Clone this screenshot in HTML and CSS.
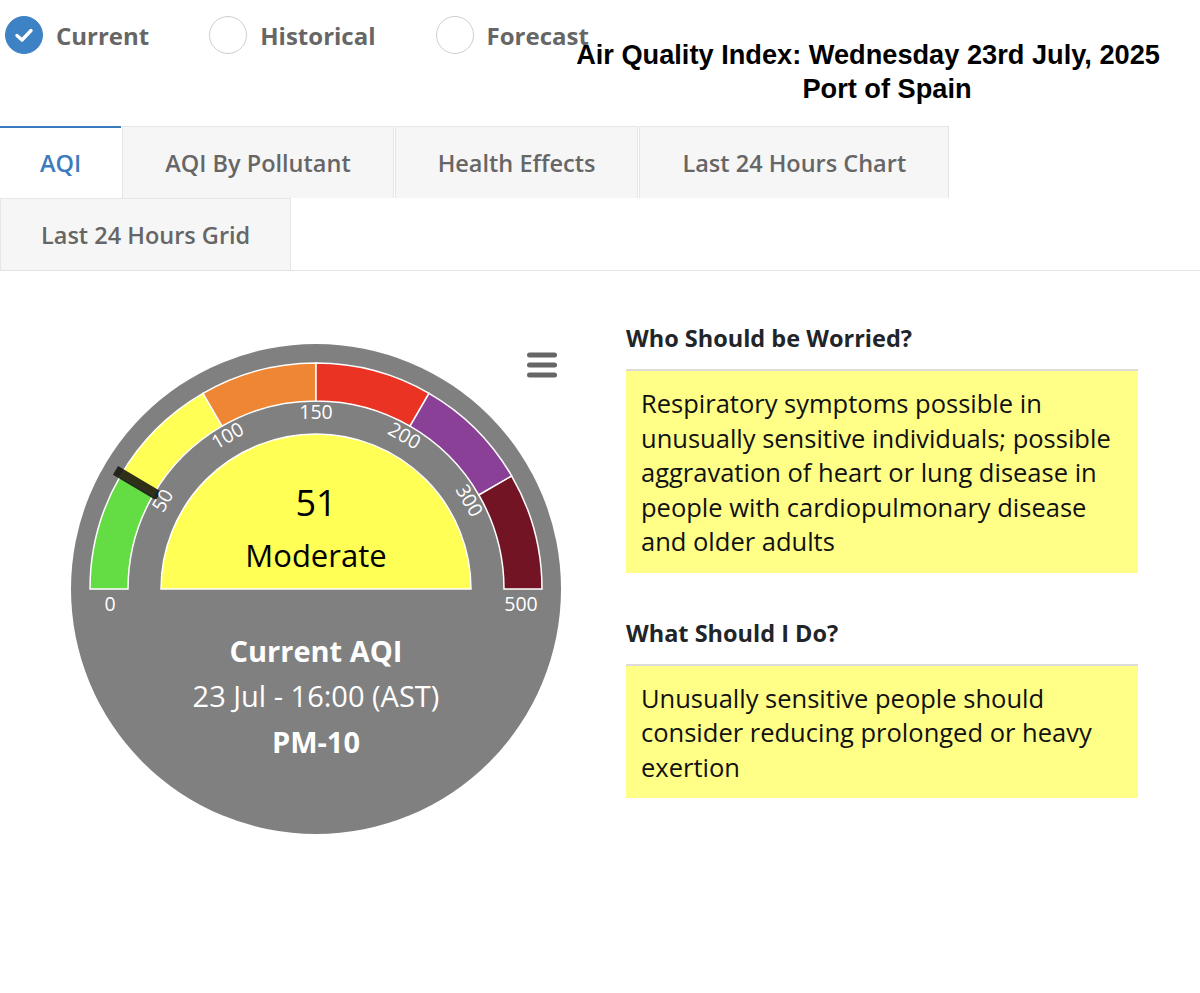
FILE: index.html
```html
<!DOCTYPE html>
<html lang="en">
<head>
<meta charset="utf-8">
<title>Air Quality Index</title>
<link rel="stylesheet" href="styles.css">
</head>
<body>
<div class="modes">
  <label class="mode"><span class="radio checked"><svg width="20" height="16" viewBox="0 0 20 16"><path d="M3 8.5 L8 13 L17 3.5" fill="none" stroke="#fff" stroke-width="3.4" stroke-linecap="round" stroke-linejoin="round"/></svg></span>Current</label>
  <label class="mode"><span class="radio"></span>Historical</label>
  <label class="mode"><span class="radio"></span>Forecast</label>
</div>
<div class="title">
  <div class="l1">Air Quality Index: Wednesday 23rd July, 2025</div>
  <div class="l2">Port of Spain</div>
</div>
<ul class="tabs">
  <li class="tab active">AQI</li>
  <li class="tab">AQI By Pollutant</li>
  <li class="tab">Health Effects</li>
  <li class="tab">Last 24 Hours Chart</li>
  <li class="break"></li>
  <li class="tab narrow">Last 24 Hours Grid</li>
</ul>
<div class="content">
  <svg class="gauge" width="600" height="570" viewBox="0 290 600 570">
    <circle cx="316" cy="588" r="245" fill="#808080"/>
    <g stroke="#fff" stroke-width="1.5">
      <path d="M90 588 A226 226 0 0 1 120.28 475 L153.19 494 A188 188 0 0 0 128 588 Z" fill="#63dd43"/>
      <path d="M120.28 475 A226 226 0 0 1 203 392.28 L222 425.19 A188 188 0 0 0 153.19 494 Z" fill="#ffff55"/>
      <path d="M203 392.28 A226 226 0 0 1 316 362 L316 400 A188 188 0 0 0 222 425.19 Z" fill="#ef8633"/>
      <path d="M316 362 A226 226 0 0 1 429 392.28 L410 425.19 A188 188 0 0 0 316 400 Z" fill="#ea3323"/>
      <path d="M429 392.28 A226 226 0 0 1 511.72 475 L478.81 494 A188 188 0 0 0 410 425.19 Z" fill="#8a4096"/>
      <path d="M511.72 475 A226 226 0 0 1 542 588 L504 588 A188 188 0 0 0 478.81 494 Z" fill="#731425"/>
      <path d="M161 588 A155 155 0 0 1 471 588 Z" fill="#ffff55"/>
    </g>
    <line x1="115.5" y1="469.4" x2="158.5" y2="494.9" stroke="#1a1a10" stroke-opacity="0.9" stroke-width="10"/>
    <g class="ticks">
      <text x="110" y="610">0</text>
      <text transform="translate(162.7 499.5) rotate(-60)" dy="6.8">50</text>
      <text transform="translate(227.5 434.7) rotate(-30)" dy="6.8">100</text>
      <text transform="translate(316 411) rotate(0)" dy="6.8">150</text>
      <text transform="translate(404.5 434.7) rotate(30)" dy="6.8">200</text>
      <text transform="translate(469.3 499.5) rotate(60)" dy="6.8">300</text>
      <text x="521" y="610">500</text>
    </g>
    <text class="val" x="316" y="515">51</text>
    <text class="cat" x="316" y="566">Moderate</text>
    <text class="lbl b" x="316" y="661">Current AQI</text>
    <text class="lbl" x="316" y="706">23 Jul - 16:00 (AST)</text>
    <text class="lbl b" x="316" y="752">PM-10</text>
    <g fill="#666">
      <rect x="527" y="351.5" width="30" height="5" rx="2.5"/>
      <rect x="527" y="361.5" width="30" height="5" rx="2.5"/>
      <rect x="527" y="371.5" width="30" height="5" rx="2.5"/>
    </g>
  </svg>
  <div class="info">
    <h3>Who Should be Worried?</h3>
    <div class="box">Respiratory symptoms possible in unusually sensitive individuals; possible aggravation of heart or lung disease in people with cardiopulmonary disease and older adults</div>
    <h3 class="second">What Should I Do?</h3>
    <div class="box">Unusually sensitive people should consider reducing prolonged or heavy exertion</div>
  </div>
</div>
</body>
</html>
```
FILE: styles.css
```css
body {
  margin: 0;
  background: #fff;
  font-family: "Open Sans", "Liberation Sans", sans-serif;
}

.modes {
  display: flex;
  align-items: center;
  gap: 60px;
  height: 70px;
  padding-left: 5px;
}

.mode {
  display: flex;
  align-items: center;
  gap: 13px;
  font-size: 24px;
  font-weight: 700;
  color: #666;
}

.radio {
  width: 38px;
  height: 38px;
  box-sizing: border-box;
  border-radius: 50%;
  border: 1.5px solid #cfcfcf;
  background: #fff;
  display: flex;
  align-items: center;
  justify-content: center;
}

.radio.checked {
  background: #3c82c4;
  border-color: #3c82c4;
}

.title {
  margin: -32px 0 0 560px;
  width: 616px;
  display: flex;
  flex-direction: column;
  align-items: center;
  font-family: "Liberation Sans", Arial, sans-serif;
  font-weight: 700;
  font-size: 27.2px;
  line-height: 34px;
  color: #000;
}

.title .l2 {
  padding-left: 38px;
}

.tabs {
  list-style: none;
  margin: 20px 0 0;
  padding: 0;
  display: flex;
  flex-wrap: wrap;
  border-bottom: 1px solid #e3e3e3;
}

.tab {
  height: 72px;
  box-sizing: border-box;
  padding: 0 42px;
  display: flex;
  align-items: center;
  font-size: 23.5px;
  font-weight: 600;
  color: #666;
  background: #f6f6f6;
  border: 1px solid #e6e6e6;
  border-bottom: none;
  margin-right: 1px;
}

.tab.narrow {
  padding: 0 40px;
}

.tab.active {
  padding: 0 40px;
  background: #fff;
  color: #3b7bbd;
  border: none;
  border-top: 2px solid #3b7bbd;
}

.break {
  flex-basis: 100%;
  height: 0;
}

.content {
  display: flex;
  align-items: flex-start;
}

.gauge {
  display: block;
  margin-top: 20px;
  flex: none;
}

.gauge text {
  font-family: "Open Sans", sans-serif;
  text-anchor: middle;
}

.ticks text {
  fill: #fff;
  font-size: 19.5px;
}

.val {
  font-size: 36px;
  fill: #000;
}

.cat {
  font-size: 31px;
  fill: #000;
}

.lbl {
  font-size: 29px;
  fill: #fff;
}

.lbl.b {
  font-weight: 700;
}

.info {
  margin-left: 26px;
  width: 512px;
  padding-top: 53px;
}

.info h3 {
  margin: 0 0 16px;
  font-size: 23.5px;
  line-height: 29px;
  font-weight: 700;
  color: #212529;
}

.info h3.second {
  margin-top: 46px;
}

.box {
  background: #ffff88;
  border-top: 2px solid #dcdcdc;
  padding: 15px 15px 14px;
  font-size: 25.5px;
  line-height: 34.5px;
  color: #111;
}
```
